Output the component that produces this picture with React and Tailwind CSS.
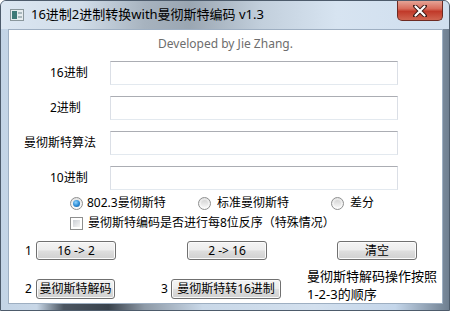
import React from 'react';

const font = { fontFamily: "'Noto Sans', 'Noto Sans CJK SC', sans-serif" };

const WinButton = ({ children, className = '' }) => (
  <button
    type="button"
    className={`h-[19px] border border-[#707070] rounded-[3px] bg-[linear-gradient(#f4f4f4_0%,#ececec_48%,#dedede_52%,#d0d0d0_100%)] shadow-[inset_0_0_0_1px_#fbfbfb] text-[12px] leading-none text-black flex items-center justify-center ${className}`}
  >
    {children}
  </button>
);

const Radio = ({ checked }) => (
  <span className="w-[13px] h-[13px] rounded-full border border-[#8e8f8f] bg-[linear-gradient(#e4e4e4,#fdfdfd)] flex items-center justify-center shrink-0">
    {checked && (
      <span className="w-[7px] h-[7px] rounded-full bg-[radial-gradient(circle_at_40%_35%,#8fd3ff_0%,#2a8ad4_55%,#1c5a9a_100%)]" />
    )}
    {!checked && <span className="w-[7px] h-[7px] rounded-full bg-[linear-gradient(#d6d6d6,#f4f4f4)]" />}
  </span>
);

const Field = ({ label, pad }) => (
  <div className="flex items-center h-[24px]">
    <div className={`w-[101px] text-[12px] text-black ${pad}`}>{label}</div>
    <div className="w-[288px] h-[24px] bg-white border border-t-[#abadb3] border-x-[#dbdfe6] border-b-[#e3e9ef]" />
  </div>
);

export default function App() {
  return (
    <div
      style={font}
      className="w-[450px] h-[311px] flex flex-col overflow-hidden rounded-t-[6px] border border-[#4d5b6b] bg-[linear-gradient(90deg,#b9cde2_0%,#c6d6e7_30%,#d3e0ee_60%,#c4d6ea_85%,#7e8e9f_100%)]"
    >
      {/* title bar */}
      <div className="h-[29px] flex items-start bg-[linear-gradient(90deg,#dce7f2_0%,#d0dce8_18%,#a7b3bf_32%,#9aa6b2_42%,#c2cfdc_58%,#d7e4f1_75%,#cfdeee_100%)]">
        <div className="flex items-center h-[28px] pl-[9px] gap-[7px]">
          <svg width="14" height="12" viewBox="0 0 14 12">
            <rect x="0.5" y="0.5" width="13" height="11" fill="#e6ecef" stroke="#8a979c" />
            <rect x="2" y="2" width="5" height="8" fill="#3f7a78" />
            <rect x="8" y="3" width="4" height="2" fill="#a9b8bd" />
            <rect x="8" y="7" width="4" height="2" fill="#a9b8bd" />
          </svg>
          <span className="text-[13px] text-black whitespace-nowrap">16进制2进制转换with曼彻斯特编码 v1.3</span>
        </div>
        <div className="flex-1" />
        <div className="mr-[6px] w-[46px] h-[20px] rounded-b-[5px] border border-t-0 border-[#6d2a22] bg-[linear-gradient(#e5a496_0%,#d86d5c_40%,#c13a2a_55%,#d06550_100%)] flex items-center justify-center">
          <svg width="14" height="12" viewBox="0 0 14 12">
            <path d="M2 1 L12 11 M12 1 L2 11" stroke="#3b1a16" strokeWidth="4" strokeLinecap="round" />
            <path d="M2.5 1.5 L11.5 10.5 M11.5 1.5 L2.5 10.5" stroke="#ffffff" strokeWidth="2.2" strokeLinecap="round" />
          </svg>
        </div>
      </div>

      {/* body */}
      <div className="flex-1 flex pl-[7px] pr-[6px] pb-[6px] bg-[linear-gradient(90deg,#c3d4e6_0%,#c8d7e7_8%,#4b5560_14%,#39424c_24%,#8d99a6_32%,#c9d8e8_45%,#d3e0ee_70%,#c4d6ea_88%,#6f7f90_100%)]">
        <div className="flex-1 bg-white border border-[#9eafc2] flex flex-col">
          <div className="pt-[6px] h-[23px] text-center text-[12px] leading-[16px] text-[#6d6d6d]">Developed by Jie Zhang.</div>

          <div className="mt-[8px] flex flex-col gap-[11px]">
            <Field label="16进制" pad="pl-[41px]" />
            <Field label="2进制" pad="pl-[41px]" />
            <Field label="曼彻斯特算法" pad="pl-[15px]" />
            <Field label="10进制" pad="pl-[41px]" />
          </div>

          <div className="mt-[5px] h-[16px] flex items-center pl-[61px] text-[12px] text-black">
            <div className="w-[128px] flex items-center gap-[4px]">
              <Radio checked />
              <span>802.3曼彻斯特</span>
            </div>
            <div className="w-[133px] flex items-center gap-[6px]">
              <Radio />
              <span>标准曼彻斯特</span>
            </div>
            <div className="flex items-center gap-[6px]">
              <Radio />
              <span>差分</span>
            </div>
          </div>

          <div className="mt-[4px] h-[16px] flex items-center pl-[61px] gap-[5px] text-[12px] text-black">
            <span className="w-[13px] h-[13px] border border-[#8e8f8f] bg-white p-[2px] shrink-0">
              <span className="block w-full h-full bg-[linear-gradient(135deg,#cbcfd5,#f6f6f6)]" />
            </span>
            <span className="whitespace-nowrap">曼彻斯特编码是否进行每8位反序（特殊情况）</span>
          </div>

          <div className="mt-[10px] flex items-center pl-[16px] text-[12px] text-black">
            <span className="w-[11px]">1</span>
            <WinButton className="w-[80px]">16 -&gt; 2</WinButton>
            <WinButton className="w-[80px] ml-[71px]">2 -&gt; 16</WinButton>
            <WinButton className="w-[80px] ml-[70px]">清空</WinButton>
          </div>

          <div className="mt-[7px] h-[36px] flex items-end pl-[16px] text-[12px] text-black">
            <div className="flex items-center mb-[4px]">
              <span className="w-[11px]">2</span>
              <WinButton className="w-[79px] h-[20px]">曼彻斯特解码</WinButton>
              <span className="ml-[46px] w-[10px]">3</span>
              <WinButton className="w-[110px] h-[20px]">曼彻斯特转16进制</WinButton>
            </div>
            <div className="ml-[26px] text-[13px] leading-[18px] self-start">
              <div>曼彻斯特解码操作按照</div>
              <div>1-2-3的顺序</div>
            </div>
          </div>
        </div>
      </div>
    </div>
  );
}
